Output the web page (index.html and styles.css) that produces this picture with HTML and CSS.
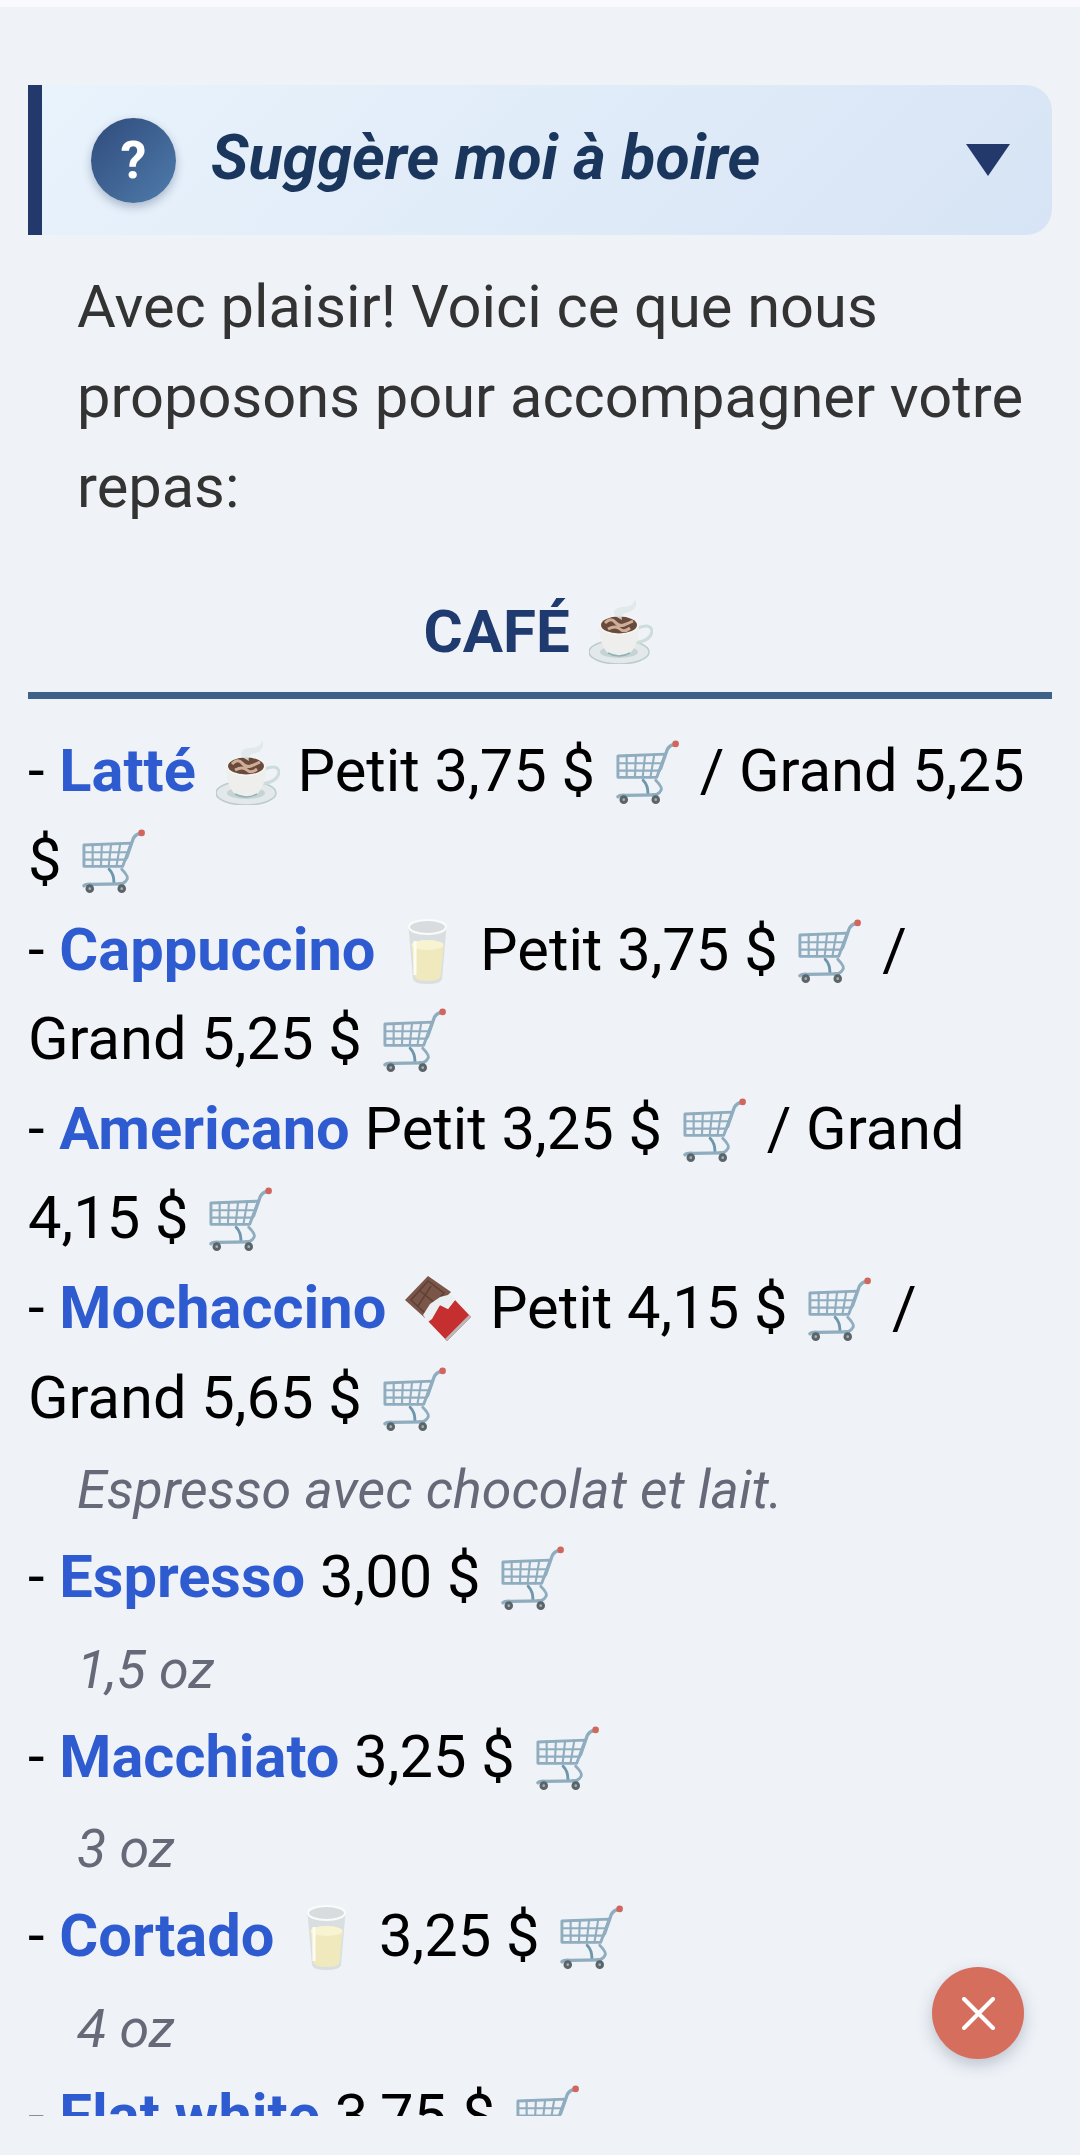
FILE: index.html
```html
<!DOCTYPE html>
<html lang="fr">
<head>
<meta charset="utf-8">
<title>Suggère moi à boire</title>
<link rel="stylesheet" href="styles.css">
</head>
<body>
<svg class="defs" width="0" height="0" aria-hidden="true">
  <symbol id="cart" viewBox="0 0 65 66">
    <g fill="none" stroke="#8fadbe" stroke-linecap="round" stroke-linejoin="round">
      <path d="M2 16 L51 14 L42 38 L2 38 Z" stroke-width="3"/>
      <path d="M2 23.5H48.5M2 31H45.5M11 15.5V38M20.5 15.5L19.5 38M30 15L27.5 38M39.5 14.5L35.5 38" stroke-width="2.2"/>
      <path d="M46 29 L53 9 Q55 5 60 4" stroke-width="3.400"/>
      <path d="M28 41 Q33 46 33 55" stroke-width="3" stroke="#6f97ac"/>
      <path d="M41 41 Q49 49 46 52 Q44 56 38 56" stroke-width="3"/>
      <path d="M2 58 Q4 56 10 56.500 L42 56" stroke-width="3.400"/>
    </g>
    <circle cx="61.500" cy="3.500" r="3.400" fill="#d0665e"/>
    <circle cx="8" cy="61" r="4.400" fill="#5c6468"/>
    <circle cx="41" cy="61" r="4.400" fill="#5c6468"/>
    <circle cx="8" cy="61" r="1.400" fill="#9ab4c2"/>
    <circle cx="41" cy="61" r="1.400" fill="#9ab4c2"/>
  </symbol>
  <symbol id="cup" viewBox="0 0 64 66">
    <ellipse cx="30" cy="54" rx="30" ry="12" fill="#e3e9ea" stroke="#bccbcd" stroke-width="1.500"/>
    <ellipse cx="30" cy="54" rx="19" ry="6" fill="#c6d3d4"/>
    <path d="M49 30 Q62 25 63 33 Q62 43 45 45" fill="none" stroke="#cfdcdc" stroke-width="3"/>
    <path d="M10 27 Q10 47 19 55 Q30 61 41 55 Q50 47 50 27 Z" fill="#eeeeec"/>
    <path d="M19 55 Q30 61 41 55" fill="none" stroke="#8fb3b5" stroke-width="1.500"/>
    <ellipse cx="30" cy="27" rx="20" ry="10" fill="#f5f5f3"/>
    <ellipse cx="30" cy="27" rx="18" ry="8.500" fill="#6a4a3c"/>
    <path d="M16 25 Q22 19 26 24 T35 27 T44 23 M19 31 Q27 27 31 31 T41 30" fill="none" stroke="#cfae98" stroke-width="3"/>
    <path d="M26 18 Q22 10 34 9 Q46 8 46 1 Q50 10 40 14 Q31 15 33 22 Z" fill="#dfe6e8" opacity=".85"/>
  </symbol>
  <symbol id="milk" viewBox="0 0 39 65">
    <path d="M0.500 8 L5 60 Q6 65 19.500 65 Q33 65 34 60 L38.500 8 Z" fill="#d9dee0"/>
    <path d="M3.500 26 L6.500 58 Q8 62 19.500 62 Q31 62 32.500 58 L35.500 26 Q35 22 19.500 22 Q4 22 3.500 26 Z" fill="#efe9bd"/>
    <ellipse cx="19.500" cy="26" rx="16" ry="5" fill="#f8f4d2"/>
    <path d="M7 22 V56" stroke="#fdfcf2" stroke-width="3"/>
    <ellipse cx="19.500" cy="8" rx="18.500" ry="7" fill="#d8dcde" stroke="#fbfbfb" stroke-width="2"/>
  </symbol>
  <symbol id="choc" viewBox="0 0 66 66">
    <path d="M23 0 L0 24 L20 42 L46 16 Z" fill="#7b5548"/>
    <path d="M23 5 L6 24 L20 37 L39 17 Z M14.500 14.500 L30 27 M26 10 L13 30" fill="none" stroke="#5d4037" stroke-width="1.500"/>
    <path d="M22 44 L35 29 L43 33 L50 24 L66 41 L42 65 Z" fill="#c62f2f"/>
    <path d="M66 41 L42 65 L40 63 L64 39 Z" fill="#b9b9b9"/>
    <path d="M18 39 L25 28 L35 21 L47 18 L50 24 L43 33 L35 29 L27 43 L23 46 Z" fill="#eceff1"/>
  </symbol>
</svg>

<div class="topbar"></div>
<main class="panel">
  <header class="accordion">
    <span class="qmark">?</span>
    <h1 class="accordion-title">Suggère moi à boire</h1>
    <svg class="caret" viewBox="0 0 44 32"><path d="M0 0H44L22 32Z"/></svg>
  </header>
  <p class="intro">Avec plaisir! Voici ce que nous proposons pour accompagner votre repas:</p>
  <h2 class="section">CAFÉ <svg class="emoji cup-h"><use href="#cup"/></svg></h2>
  <div class="menu">
    <div class="item">- <b class="name">Latté</b> <svg class="emoji cup"><use href="#cup"/></svg> Petit 3,75 $ <svg class="emoji cart"><use href="#cart"/></svg> / Grand 5,25 $ <svg class="emoji cart"><use href="#cart"/></svg></div>
    <div class="item">- <b class="name">Cappuccino</b> <svg class="emoji milk"><use href="#milk"/></svg> Petit 3,75 $ <svg class="emoji cart"><use href="#cart"/></svg> / Grand 5,25 $ <svg class="emoji cart"><use href="#cart"/></svg></div>
    <div class="item">- <b class="name">Americano</b> Petit 3,25 $ <svg class="emoji cart"><use href="#cart"/></svg> / Grand 4,15 $ <svg class="emoji cart"><use href="#cart"/></svg></div>
    <div class="item">- <b class="name">Mochaccino</b> <svg class="emoji choc"><use href="#choc"/></svg> Petit 4,15 $ <svg class="emoji cart"><use href="#cart"/></svg> / Grand 5,65 $ <svg class="emoji cart"><use href="#cart"/></svg></div>
    <p class="note">Espresso avec chocolat et lait.</p>
    <div class="item">- <b class="name">Espresso</b> 3,00 $ <svg class="emoji cart"><use href="#cart"/></svg></div>
    <p class="note">1,5 oz</p>
    <div class="item">- <b class="name">Macchiato</b> 3,25 $ <svg class="emoji cart"><use href="#cart"/></svg></div>
    <p class="note">3 oz</p>
    <div class="item">- <b class="name">Cortado</b> <svg class="emoji milk"><use href="#milk"/></svg> 3,25 $ <svg class="emoji cart"><use href="#cart"/></svg></div>
    <p class="note">4 oz</p>
    <div class="item">- <b class="name">Flat white</b> 3,75 $ <svg class="emoji cart"><use href="#cart"/></svg></div>
  </div>
</main>
<button class="fab" aria-label="Fermer">
  <svg viewBox="0 0 32 32"><path d="M2 2L30 30M30 2L2 30"/></svg>
</button>
</body>
</html>
```
FILE: styles.css
```css
* { box-sizing: border-box; }
html, body { margin: 0; height: 2155px; overflow: hidden; }
body {
  background: #eff3f8;
  font-family: Roboto, "Noto Sans", sans-serif;
  position: relative;
}
.defs { position: absolute; }
.topbar { height: 7px; background: #f9f9fe; }
.panel {
  height: 2109px;
  padding: 78px 28px 0;
  overflow: hidden;
}
.accordion {
  height: 150px;
  display: flex;
  align-items: center;
  padding: 0 42px 0 49px;
  border-left: 14px solid #23396b;
  border-radius: 0 26px 26px 0;
  background: linear-gradient(135deg, #e9f3fc, #d7e4f5);
}
.qmark {
  flex: none;
  width: 85px;
  height: 85px;
  border-radius: 50%;
  display: flex;
  align-items: center;
  justify-content: center;
  background: linear-gradient(135deg, #2f4b7c, #4f7cab);
  color: #fff;
  font-weight: 700;
  font-size: 52px;
  box-shadow: 0 4px 10px rgba(30, 50, 90, .3);
}
.accordion-title {
  flex: 1;
  margin: -5px 0 0 35px;
  font-size: 62.700px;
  font-weight: 700;
  font-style: italic;
  color: #1a365d;
}
.caret { flex: none; width: 44px; height: 32px; fill: #23396b; }
.intro {
  margin: 27px 0 0;
  padding-left: 49px;
  font-size: 59.600px;
  line-height: 90px;
  color: #333;
}
.section {
  margin: 41px 0 0;
  height: 126px;
  padding-top: 24px;
  border-bottom: 7px solid #3e6287;
  text-align: center;
  font-size: 60px;
  line-height: 70px;
  font-weight: 700;
  color: #1f3a6e;
}
.menu { padding-top: 27.500px; }
.item {
  font-size: 59.600px;
  line-height: 89.600px;
  color: #000;
}
.name { color: #2f5bd0; font-weight: 700; }
.note {
  margin: 0 0 -2px;
  padding: 2px 0 0 49px;
  font-size: 53.800px;
  line-height: 90px;
  font-style: italic;
  color: #666a78;
}
.emoji { display: inline-block; overflow: visible; vertical-align: -14px; }
.cart { width: 63px; height: 65px; margin: 0 6px; }
.cup { width: 64px; height: 66px; margin: 0 3px 0 5px; }
.cup-h { width: 64px; height: 66px; margin: 0 4px; vertical-align: -12px; }
.milk { width: 39px; height: 65px; margin: 0 18px; }
.choc { width: 66px; height: 66px; margin: 0 4px; }
.fab {
  position: absolute;
  left: 932px;
  top: 1967px;
  width: 92px;
  height: 92px;
  padding: 0;
  border: 0;
  border-radius: 50%;
  background: #d66e5e;
  box-shadow: 0 6px 16px rgba(40, 50, 80, .25);
  display: flex;
  align-items: center;
  justify-content: center;
}
.fab svg { width: 33px; height: 33px; fill: none; stroke: #fff; stroke-width: 4; stroke-linecap: round; }
```
